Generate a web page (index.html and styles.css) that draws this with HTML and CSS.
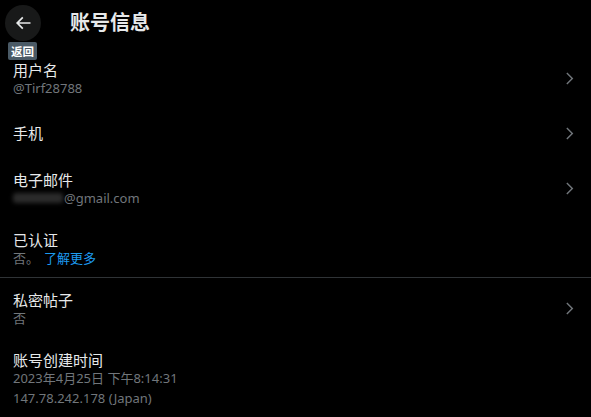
FILE: index.html
```html
<!DOCTYPE html>
<html lang="zh-CN">
<head>
<meta charset="utf-8">
<title>账号信息</title>
<link rel="stylesheet" href="styles.css">
</head>
<body>
<div class="page">
  <header class="header">
    <div class="back-wrap">
      <button class="back-btn" aria-label="返回">
        <svg viewBox="0 0 24 24" class="back-icon"><path d="M7.414 13l5.043 5.04-1.414 1.42L3.586 12l7.457-7.46 1.414 1.42L7.414 11H21v2H7.414z"/></svg>
      </button>
      <span class="tooltip">返回</span>
    </div>
    <h1 class="title">账号信息</h1>
  </header>

  <div class="row">
    <div class="row-text">
      <div class="row-title">用户名</div>
      <div class="row-sub">@Tirf28788</div>
    </div>
    <svg viewBox="0 0 24 24" class="chev"><path d="M14.586 12L7.543 4.96l1.414-1.42L17.414 12l-8.457 8.46-1.414-1.42L14.586 12z"/></svg>
  </div>

  <div class="row row-single">
    <div class="row-text">
      <div class="row-title">手机</div>
    </div>
    <svg viewBox="0 0 24 24" class="chev"><path d="M14.586 12L7.543 4.96l1.414-1.42L17.414 12l-8.457 8.46-1.414-1.42L14.586 12z"/></svg>
  </div>

  <div class="row">
    <div class="row-text">
      <div class="row-title">电子邮件</div>
      <div class="row-sub"><span class="redact"></span>@gmail.com</div>
    </div>
    <svg viewBox="0 0 24 24" class="chev"><path d="M14.586 12L7.543 4.96l1.414-1.42L17.414 12l-8.457 8.46-1.414-1.42L14.586 12z"/></svg>
  </div>

  <div class="row row-last">
    <div class="row-text">
      <div class="row-title">已认证</div>
      <div class="row-sub">否。 <a class="link" href="#">了解更多</a></div>
    </div>
  </div>

  <div class="row">
    <div class="row-text">
      <div class="row-title">私密帖子</div>
      <div class="row-sub">否</div>
    </div>
    <svg viewBox="0 0 24 24" class="chev"><path d="M14.586 12L7.543 4.96l1.414-1.42L17.414 12l-8.457 8.46-1.414-1.42L14.586 12z"/></svg>
  </div>

  <div class="row">
    <div class="row-text">
      <div class="row-title">账号创建时间</div>
      <div class="row-sub">2023年4月25日 下午8:14:31</div>
      <div class="row-sub row-sub-gap">147.78.242.178 (Japan)</div>
    </div>
  </div>
</div>
</body>
</html>
```

FILE: styles.css
```css
* { box-sizing: border-box; }
html, body {
  margin: 0;
  padding: 0;
  background: #000;
}
body {
  font-family: "Noto Sans", "Noto Sans CJK SC", sans-serif;
  color: #e7e9ea;
}
.page {
  width: 591px;
  height: 417px;
  overflow: hidden;
  background: #000;
}
.header {
  height: 48px;
  display: flex;
  align-items: flex-start;
  padding: 5px 0 0 5px;
}
.back-wrap {
  position: relative;
  width: 36px;
  height: 36px;
}
.back-btn {
  width: 36px;
  height: 36px;
  border: none;
  padding: 0;
  border-radius: 50%;
  background: #181919;
  display: flex;
  align-items: center;
  justify-content: center;
}
.back-icon {
  width: 20px;
  height: 20px;
  fill: #e7e9ea;
}
.tooltip {
  position: absolute;
  left: 3px;
  top: 37px;
  width: 29px;
  height: 18px;
  background: #4a5a66;
  color: #fff;
  font-size: 11.5px;
  line-height: 18px;
  text-align: center;
  border-radius: 2px;
  font-family: "Noto Sans CJK SC", sans-serif;
  font-weight: 700;
}
.title {
  margin: 0 0 0 29px;
  font-size: 20px;
  font-weight: 700;
  line-height: 36px;
  height: 36px;
  color: #e7e9ea;
}
.row {
  display: flex;
  align-items: center;
  justify-content: space-between;
  padding: 12px 13px 12px 13px;
}
.row-single {
  padding-top: 15px;
  padding-bottom: 15px;
}
.row-last {
  border-bottom: 1px solid #2f3336;
  padding-bottom: 11px;
}
.row-text {
  display: flex;
  flex-direction: column;
}
.row-title {
  font-size: 15px;
  line-height: 20px;
  height: 20px;
}
.row-sub {
  font-size: 13px;
  line-height: 16px;
  color: #71767b;
  display: flex;
  align-items: center;
}
.row-sub-gap {
  margin-top: 4px;
}
.link {
  color: #1d9bf0;
  text-decoration: none;
  margin-left: 5px;
}
.redact {
  display: inline-block;
  width: 50px;
  height: 10px;
  background: #2b2b2b;
  filter: blur(2px);
  border-radius: 3px;
  margin-right: 1px;
}
.chev {
  width: 17px;
  height: 17px;
  fill: #71767b;
  flex: none;
}
```
